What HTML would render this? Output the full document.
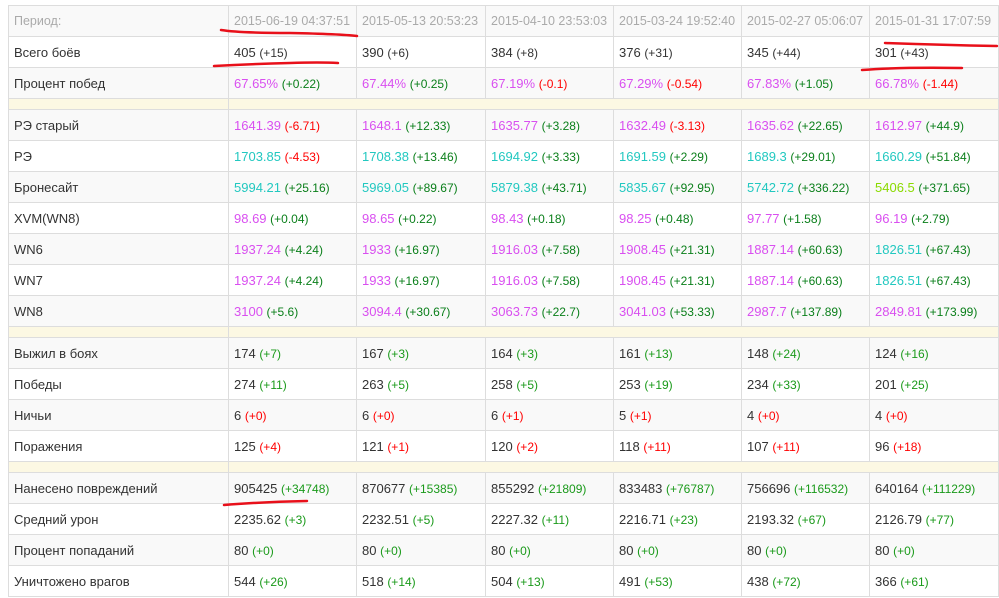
<!DOCTYPE html>
<html><head><meta charset="utf-8"><style>
body{margin:0;background:#fff;width:999px;height:598px;overflow:hidden;position:relative;font-family:"Liberation Sans",sans-serif;}
table{position:absolute;left:8px;top:5px;border-collapse:collapse;table-layout:fixed;width:990px;font-size:13px;color:#333;}
td{border:1px solid #ddd;height:30px;padding:0 0 0 5px;white-space:nowrap;overflow:hidden;}
tr.h td{color:#aaa;font-size:12.5px;}
tr.g td{background:#f9f9f9;}
tr.s td{height:10px;background:#fcf8e3;}
small{font-size:12px;}
.p{color:#d94ff0}.t{color:#22c8c0}.l{color:#8ada00}
.dg{color:#0a7f1a}.dr{color:#f00}.dn{color:#1a9a1a}
</style></head><body>
<table>
<colgroup><col style="width:220px"><col style="width:128px"><col style="width:129px"><col style="width:128px"><col style="width:128px"><col style="width:128px"><col style="width:129px"></colgroup>
<tr class="h g"><td>Период:</td><td>2015-06-19 04:37:51</td><td>2015-05-13 20:53:23</td><td>2015-04-10 23:53:03</td><td>2015-03-24 19:52:40</td><td>2015-02-27 05:06:07</td><td>2015-01-31 17:07:59</td></tr>
<tr><td>Всего боёв</td><td>405 <small>(+15)</small></td><td>390 <small>(+6)</small></td><td>384 <small>(+8)</small></td><td>376 <small>(+31)</small></td><td>345 <small>(+44)</small></td><td>301 <small>(+43)</small></td></tr>
<tr class="g"><td>Процент побед</td><td><span class="p">67.65%</span> <small class="dg">(+0.22)</small></td><td><span class="p">67.44%</span> <small class="dg">(+0.25)</small></td><td><span class="p">67.19%</span> <small class="dr">(-0.1)</small></td><td><span class="p">67.29%</span> <small class="dr">(-0.54)</small></td><td><span class="p">67.83%</span> <small class="dg">(+1.05)</small></td><td><span class="p">66.78%</span> <small class="dr">(-1.44)</small></td></tr>
<tr class="s"><td></td><td colspan="6"></td></tr>
<tr class="g"><td>РЭ старый</td><td><span class="p">1641.39</span> <small class="dr">(-6.71)</small></td><td><span class="p">1648.1</span> <small class="dg">(+12.33)</small></td><td><span class="p">1635.77</span> <small class="dg">(+3.28)</small></td><td><span class="p">1632.49</span> <small class="dr">(-3.13)</small></td><td><span class="p">1635.62</span> <small class="dg">(+22.65)</small></td><td><span class="p">1612.97</span> <small class="dg">(+44.9)</small></td></tr>
<tr><td>РЭ</td><td><span class="t">1703.85</span> <small class="dr">(-4.53)</small></td><td><span class="t">1708.38</span> <small class="dg">(+13.46)</small></td><td><span class="t">1694.92</span> <small class="dg">(+3.33)</small></td><td><span class="t">1691.59</span> <small class="dg">(+2.29)</small></td><td><span class="t">1689.3</span> <small class="dg">(+29.01)</small></td><td><span class="t">1660.29</span> <small class="dg">(+51.84)</small></td></tr>
<tr class="g"><td>Бронесайт</td><td><span class="t">5994.21</span> <small class="dg">(+25.16)</small></td><td><span class="t">5969.05</span> <small class="dg">(+89.67)</small></td><td><span class="t">5879.38</span> <small class="dg">(+43.71)</small></td><td><span class="t">5835.67</span> <small class="dg">(+92.95)</small></td><td><span class="t">5742.72</span> <small class="dg">(+336.22)</small></td><td><span class="l">5406.5</span> <small class="dg">(+371.65)</small></td></tr>
<tr><td>XVM(WN8)</td><td><span class="p">98.69</span> <small class="dg">(+0.04)</small></td><td><span class="p">98.65</span> <small class="dg">(+0.22)</small></td><td><span class="p">98.43</span> <small class="dg">(+0.18)</small></td><td><span class="p">98.25</span> <small class="dg">(+0.48)</small></td><td><span class="p">97.77</span> <small class="dg">(+1.58)</small></td><td><span class="p">96.19</span> <small class="dg">(+2.79)</small></td></tr>
<tr class="g"><td>WN6</td><td><span class="p">1937.24</span> <small class="dg">(+4.24)</small></td><td><span class="p">1933</span> <small class="dg">(+16.97)</small></td><td><span class="p">1916.03</span> <small class="dg">(+7.58)</small></td><td><span class="p">1908.45</span> <small class="dg">(+21.31)</small></td><td><span class="p">1887.14</span> <small class="dg">(+60.63)</small></td><td><span class="t">1826.51</span> <small class="dg">(+67.43)</small></td></tr>
<tr><td>WN7</td><td><span class="p">1937.24</span> <small class="dg">(+4.24)</small></td><td><span class="p">1933</span> <small class="dg">(+16.97)</small></td><td><span class="p">1916.03</span> <small class="dg">(+7.58)</small></td><td><span class="p">1908.45</span> <small class="dg">(+21.31)</small></td><td><span class="p">1887.14</span> <small class="dg">(+60.63)</small></td><td><span class="t">1826.51</span> <small class="dg">(+67.43)</small></td></tr>
<tr class="g"><td>WN8</td><td><span class="p">3100</span> <small class="dg">(+5.6)</small></td><td><span class="p">3094.4</span> <small class="dg">(+30.67)</small></td><td><span class="p">3063.73</span> <small class="dg">(+22.7)</small></td><td><span class="p">3041.03</span> <small class="dg">(+53.33)</small></td><td><span class="p">2987.7</span> <small class="dg">(+137.89)</small></td><td><span class="p">2849.81</span> <small class="dg">(+173.99)</small></td></tr>
<tr class="s"><td></td><td colspan="6"></td></tr>
<tr class="g"><td>Выжил в боях</td><td>174 <small class="dn">(+7)</small></td><td>167 <small class="dn">(+3)</small></td><td>164 <small class="dn">(+3)</small></td><td>161 <small class="dn">(+13)</small></td><td>148 <small class="dn">(+24)</small></td><td>124 <small class="dn">(+16)</small></td></tr>
<tr><td>Победы</td><td>274 <small class="dn">(+11)</small></td><td>263 <small class="dn">(+5)</small></td><td>258 <small class="dn">(+5)</small></td><td>253 <small class="dn">(+19)</small></td><td>234 <small class="dn">(+33)</small></td><td>201 <small class="dn">(+25)</small></td></tr>
<tr class="g"><td>Ничьи</td><td>6 <small class="dr">(+0)</small></td><td>6 <small class="dr">(+0)</small></td><td>6 <small class="dr">(+1)</small></td><td>5 <small class="dr">(+1)</small></td><td>4 <small class="dr">(+0)</small></td><td>4 <small class="dr">(+0)</small></td></tr>
<tr><td>Поражения</td><td>125 <small class="dr">(+4)</small></td><td>121 <small class="dr">(+1)</small></td><td>120 <small class="dr">(+2)</small></td><td>118 <small class="dr">(+11)</small></td><td>107 <small class="dr">(+11)</small></td><td>96 <small class="dr">(+18)</small></td></tr>
<tr class="s"><td></td><td colspan="6"></td></tr>
<tr class="g"><td>Нанесено повреждений</td><td>905425 <small class="dn">(+34748)</small></td><td>870677 <small class="dn">(+15385)</small></td><td>855292 <small class="dn">(+21809)</small></td><td>833483 <small class="dn">(+76787)</small></td><td>756696 <small class="dn">(+116532)</small></td><td>640164 <small class="dn">(+111229)</small></td></tr>
<tr><td>Средний урон</td><td>2235.62 <small class="dn">(+3)</small></td><td>2232.51 <small class="dn">(+5)</small></td><td>2227.32 <small class="dn">(+11)</small></td><td>2216.71 <small class="dn">(+23)</small></td><td>2193.32 <small class="dn">(+67)</small></td><td>2126.79 <small class="dn">(+77)</small></td></tr>
<tr class="g"><td>Процент попаданий</td><td>80 <small class="dn">(+0)</small></td><td>80 <small class="dn">(+0)</small></td><td>80 <small class="dn">(+0)</small></td><td>80 <small class="dn">(+0)</small></td><td>80 <small class="dn">(+0)</small></td><td>80 <small class="dn">(+0)</small></td></tr>
<tr><td>Уничтожено врагов</td><td>544 <small class="dn">(+26)</small></td><td>518 <small class="dn">(+14)</small></td><td>504 <small class="dn">(+13)</small></td><td>491 <small class="dn">(+53)</small></td><td>438 <small class="dn">(+72)</small></td><td>366 <small class="dn">(+61)</small></td></tr>
</table>
<svg width="999" height="598" style="position:absolute;left:0;top:0" fill="none" stroke="#e8101a" stroke-width="2.5" stroke-linecap="round">
<path d="M221 30 Q240 33 290 33 Q340 34 357 36"/>
<path d="M214 66 Q250 64 290 63 Q320 62 338 63"/>
<path d="M885 43 Q940 45 997 46"/>
<path d="M862 70 Q900 67 962 68"/>
<path d="M224 505 Q260 502 307 501"/>
</svg>
</body></html>
